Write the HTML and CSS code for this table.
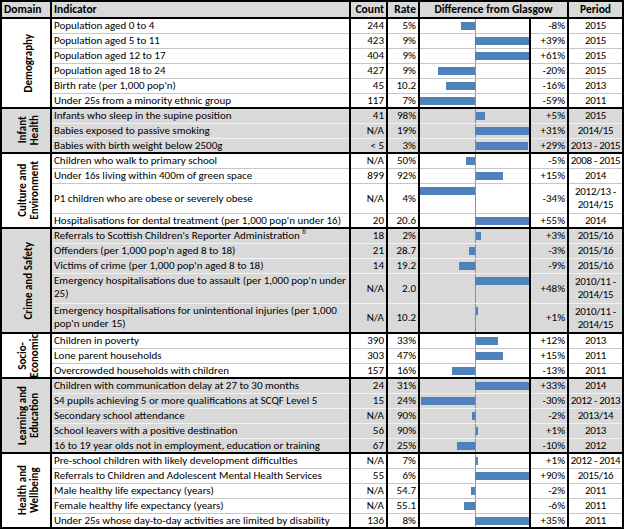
FILE: index.html
```html
<!DOCTYPE html>
<html>
<head>
<meta charset="utf-8">
<link rel="stylesheet" href="styles.css">
</head>
<body>
<table class="tbl">
  <colgroup>
    <col class="c-dom"><col class="c-ind"><col class="c-cnt"><col class="c-rate"><col class="c-bar"><col class="c-pct"><col class="c-per">
  </colgroup>
  <thead>
    <tr class="hdr">
      <th class="left">Domain</th>
      <th class="left">Indicator</th>
      <th class="num">Count</th>
      <th class="num">Rate</th>
      <th colspan="2" class="ctr">Difference from Glasgow</th>
      <th class="ctr">Period</th>
    </tr>
  </thead>

  <tbody class="grp white">
    <tr><td class="dom" rowspan="6"><div class="dom-box"><span class="vt">Demography</span></div></td>
      <td class="ind">Population aged 0 to 4</td><td class="num">244</td><td class="num">5%</td>
      <td class="bar"><div class="track"><div class="neg"><i style="width:14px"></i></div><div class="pos"></div></div></td><td class="num">-8%</td><td class="per">2015</td></tr>
    <tr><td class="ind">Population aged 5 to 11</td><td class="num">423</td><td class="num">9%</td>
      <td class="bar"><div class="track"><div class="neg"></div><div class="pos"><i style="width:54px"></i></div></div></td><td class="num">+39%</td><td class="per">2015</td></tr>
    <tr><td class="ind">Population aged 12 to 17</td><td class="num">404</td><td class="num">9%</td>
      <td class="bar"><div class="track"><div class="neg"></div><div class="pos"><i style="width:54px"></i></div></div></td><td class="num">+61%</td><td class="per">2015</td></tr>
    <tr><td class="ind">Population aged 18 to 24</td><td class="num">427</td><td class="num">9%</td>
      <td class="bar"><div class="track"><div class="neg"><i style="width:37px"></i></div><div class="pos"></div></div></td><td class="num">-20%</td><td class="per">2015</td></tr>
    <tr><td class="ind">Birth rate (per 1,000 pop'n)</td><td class="num">45</td><td class="num">10.2</td>
      <td class="bar"><div class="track"><div class="neg"><i style="width:29px"></i></div><div class="pos"></div></div></td><td class="num">-16%</td><td class="per">2013</td></tr>
    <tr><td class="ind">Under 25s from a minority ethnic group</td><td class="num">117</td><td class="num">7%</td>
      <td class="bar"><div class="track"><div class="neg"><i style="width:55px"></i></div><div class="pos"></div></div></td><td class="num">-59%</td><td class="per">2011</td></tr>
  </tbody>

  <tbody class="grp gray">
    <tr><td class="dom" rowspan="3"><div class="dom-box"><span class="vt">Infant<br>Health</span></div></td>
      <td class="ind">Infants who sleep in the supine position</td><td class="num">41</td><td class="num">98%</td>
      <td class="bar"><div class="track"><div class="neg"></div><div class="pos"><i style="width:9px"></i></div></div></td><td class="num">+5%</td><td class="per">2015</td></tr>
    <tr><td class="ind">Babies exposed to passive smoking</td><td class="num">N/A</td><td class="num">19%</td>
      <td class="bar"><div class="track"><div class="neg"></div><div class="pos"><i style="width:54px"></i></div></div></td><td class="num">+31%</td><td class="per">2014/15</td></tr>
    <tr><td class="ind">Babies with birth weight below 2500g</td><td class="num">&lt; 5</td><td class="num">3%</td>
      <td class="bar"><div class="track"><div class="neg"></div><div class="pos"><i style="width:52px"></i></div></div></td><td class="num">+29%</td><td class="per">2013 - 2015</td></tr>
  </tbody>

  <tbody class="grp white">
    <tr><td class="dom" rowspan="4"><div class="dom-box"><span class="vt">Culture and<br>Environment</span></div></td>
      <td class="ind">Children who walk to primary school</td><td class="num">N/A</td><td class="num">50%</td>
      <td class="bar"><div class="track"><div class="neg"><i style="width:9px"></i></div><div class="pos"></div></div></td><td class="num">-5%</td><td class="per">2008 - 2015</td></tr>
    <tr><td class="ind">Under 16s living within 400m of green space</td><td class="num">899</td><td class="num">92%</td>
      <td class="bar"><div class="track"><div class="neg"></div><div class="pos"><i style="width:27px"></i></div></div></td><td class="num">+15%</td><td class="per">2014</td></tr>
    <tr class="dbl"><td class="ind">P1 children who are obese or severely obese</td><td class="num">N/A</td><td class="num">4%</td>
      <td class="bar"><div class="track"><div class="neg"><i style="width:55px"></i></div><div class="pos"></div></div></td><td class="num">-34%</td><td class="per">2012/13 -<br>2014/15</td></tr>
    <tr><td class="ind">Hospitalisations for dental treatment (per 1,000 pop'n under 16)</td><td class="num">20</td><td class="num">20.6</td>
      <td class="bar"><div class="track"><div class="neg"></div><div class="pos"><i style="width:54px"></i></div></div></td><td class="num">+55%</td><td class="per">2014</td></tr>
  </tbody>

  <tbody class="grp gray">
    <tr><td class="dom" rowspan="5"><div class="dom-box"><span class="vt">Crime and Safety</span></div></td>
      <td class="ind">Referrals to Scottish Children's Reporter Administration <sup>6</sup></td><td class="num">18</td><td class="num">2%</td>
      <td class="bar"><div class="track"><div class="neg"></div><div class="pos"><i style="width:5px"></i></div></div></td><td class="num">+3%</td><td class="per">2015/16</td></tr>
    <tr><td class="ind">Offenders (per 1,000 pop'n aged 8 to 18)</td><td class="num">21</td><td class="num">28.7</td>
      <td class="bar"><div class="track"><div class="neg"><i style="width:6px"></i></div><div class="pos"></div></div></td><td class="num">-3%</td><td class="per">2015/16</td></tr>
    <tr><td class="ind">Victims of crime (per 1,000 pop'n aged 8 to 18)</td><td class="num">14</td><td class="num">19.2</td>
      <td class="bar"><div class="track"><div class="neg"><i style="width:16px"></i></div><div class="pos"></div></div></td><td class="num">-9%</td><td class="per">2015/16</td></tr>
    <tr class="dbl"><td class="ind top">Emergency hospitalisations due to assault (per 1,000 pop'n under<br>25)</td><td class="num">N/A</td><td class="num">2.0</td>
      <td class="bar"><div class="track"><div class="neg"></div><div class="pos"><i style="width:54px"></i></div></div></td><td class="num">+48%</td><td class="per">2010/11 -<br>2014/15</td></tr>
    <tr class="dbl"><td class="ind top">Emergency hospitalisations for unintentional injuries (per 1,000<br>pop'n under 15)</td><td class="num">N/A</td><td class="num">10.2</td>
      <td class="bar"><div class="track"><div class="neg"></div><div class="pos"><i style="width:2px"></i></div></div></td><td class="num">+1%</td><td class="per">2010/11 -<br>2014/15</td></tr>
  </tbody>

  <tbody class="grp white">
    <tr><td class="dom" rowspan="3"><div class="dom-box"><span class="vt">Socio-<br>Economic</span></div></td>
      <td class="ind">Children in poverty</td><td class="num">390</td><td class="num">33%</td>
      <td class="bar"><div class="track"><div class="neg"></div><div class="pos"><i style="width:22px"></i></div></div></td><td class="num">+12%</td><td class="per">2013</td></tr>
    <tr><td class="ind">Lone parent households</td><td class="num">303</td><td class="num">47%</td>
      <td class="bar"><div class="track"><div class="neg"></div><div class="pos"><i style="width:27px"></i></div></div></td><td class="num">+15%</td><td class="per">2011</td></tr>
    <tr><td class="ind">Overcrowded households with children</td><td class="num">157</td><td class="num">16%</td>
      <td class="bar"><div class="track"><div class="neg"><i style="width:23px"></i></div><div class="pos"></div></div></td><td class="num">-13%</td><td class="per">2011</td></tr>
  </tbody>

  <tbody class="grp gray">
    <tr><td class="dom" rowspan="5"><div class="dom-box"><span class="vt">Learning and<br>Education</span></div></td>
      <td class="ind">Children with communication delay at 27 to 30 months</td><td class="num">24</td><td class="num">31%</td>
      <td class="bar"><div class="track"><div class="neg"></div><div class="pos"><i style="width:54px"></i></div></div></td><td class="num">+33%</td><td class="per">2014</td></tr>
    <tr><td class="ind">S4 pupils achieving 5 or more qualifications at SCQF Level 5</td><td class="num">15</td><td class="num">24%</td>
      <td class="bar"><div class="track"><div class="neg"><i style="width:54px"></i></div><div class="pos"></div></div></td><td class="num">-30%</td><td class="per">2012 - 2013</td></tr>
    <tr><td class="ind">Secondary school attendance</td><td class="num">N/A</td><td class="num">90%</td>
      <td class="bar"><div class="track"><div class="neg"><i style="width:3px"></i></div><div class="pos"></div></div></td><td class="num">-2%</td><td class="per">2013/14</td></tr>
    <tr><td class="ind">School leavers with a positive destination</td><td class="num">56</td><td class="num">90%</td>
      <td class="bar"><div class="track"><div class="neg"></div><div class="pos"><i style="width:2px"></i></div></div></td><td class="num">+1%</td><td class="per">2013</td></tr>
    <tr><td class="ind">16 to 19 year olds not in employment, education or training</td><td class="num">67</td><td class="num">25%</td>
      <td class="bar"><div class="track"><div class="neg"><i style="width:18px"></i></div><div class="pos"></div></div></td><td class="num">-10%</td><td class="per">2012</td></tr>
  </tbody>

  <tbody class="grp white">
    <tr><td class="dom" rowspan="5"><div class="dom-box"><span class="vt">Health and<br>Wellbeing</span></div></td>
      <td class="ind">Pre-school children with likely development difficulties</td><td class="num">N/A</td><td class="num">7%</td>
      <td class="bar"><div class="track"><div class="neg"></div><div class="pos"><i style="width:2px"></i></div></div></td><td class="num">+1%</td><td class="per">2012 - 2014</td></tr>
    <tr><td class="ind">Referrals to Children and Adolescent Mental Health Services</td><td class="num">55</td><td class="num">6%</td>
      <td class="bar"><div class="track"><div class="neg"></div><div class="pos"><i style="width:54px"></i></div></div></td><td class="num">+90%</td><td class="per">2015/16</td></tr>
    <tr><td class="ind">Male healthy life expectancy (years)</td><td class="num">N/A</td><td class="num">54.7</td>
      <td class="bar"><div class="track"><div class="neg"><i style="width:4px"></i></div><div class="pos"></div></div></td><td class="num">-2%</td><td class="per">2011</td></tr>
    <tr><td class="ind">Female healthy life expectancy (years)</td><td class="num">N/A</td><td class="num">55.1</td>
      <td class="bar"><div class="track"><div class="neg"><i style="width:11px"></i></div><div class="pos"></div></div></td><td class="num">-6%</td><td class="per">2011</td></tr>
    <tr><td class="ind">Under 25s whose day-to-day activities are limited by disability</td><td class="num">136</td><td class="num">8%</td>
      <td class="bar"><div class="track"><div class="neg"></div><div class="pos"><i style="width:54px"></i></div></div></td><td class="num">+35%</td><td class="per">2011</td></tr>
  </tbody>
</table>
</body>
</html>
```

FILE: styles.css
```css
html, body {
  margin: 0;
  padding: 0;
  background: #ffffff;
}

.tbl {
  border-collapse: collapse;
  table-layout: fixed;
  width: 622px;
  font-family: Carlito, Lato, "Liberation Sans", sans-serif;
  font-size: 11px;
  line-height: 13px;
  color: #000;
  border: 2px solid #000;
}

.c-dom { width: 50px; }
.c-ind { width: 299px; }
.c-cnt { width: 37px; }
.c-rate { width: 32px; }
.c-bar { width: 111px; }
.c-pct { width: 38px; }
.c-per { width: 55px; }

th, td {
  padding: 0 2px;
  border-left: 2px solid #000;
  border-right: 2px solid #000;
  white-space: nowrap;
  overflow: hidden;
  vertical-align: middle;
}

.hdr th {
  height: 15px;
  background: #d9d9d9;
  font-weight: bold;
  border-bottom: 2px solid #000;
  font-size: 11.5px;
}

th.left { text-align: left; }
.num { text-align: right; }
.ctr { text-align: center; }

.per {
  text-align: center;
  padding: 0;
  letter-spacing: -0.3px;
}

.grp tr { height: 15px; }
.grp tr.dbl { height: 30px; }

.grp tr:first-child td { border-top: 2px solid #000; }

.white td { background-color: #ffffff; border-bottom: 1px solid #c6c6c6; }
.gray td { background-color: #d9d9d9; border-bottom: 1px solid #f2f2f2; }

.grp tr:last-child td { border-bottom: 2px solid #000; }
.grp td.dom { border-bottom: 2px solid #000; }

.ind.top { vertical-align: top; }

sup {
  font-size: 7px;
  line-height: 0;
  vertical-align: 5px;
}

td.dom {
  text-align: center;
  font-weight: bold;
  padding: 0 0 0 5px;
  overflow: visible;
}

.dom-box {
  height: 30px;
  display: flex;
  align-items: center;
  justify-content: center;
}

.vt {
  flex: none;
  display: block;
  writing-mode: vertical-rl;
  transform: rotate(180deg);
  line-height: 12px;
  text-align: center;
  white-space: nowrap;
}

td.bar {
  padding: 3px 0 0 0;
  vertical-align: top;
  background-image: linear-gradient(#d6679f, #d6679f);
  background-size: 1px 100%;
  background-position: 55px 0;
  background-repeat: no-repeat;
}

.track {
  display: flex;
  height: 8px;
}

.neg {
  width: 55px;
  display: flex;
  justify-content: flex-end;
}

.pos {
  margin-left: 1px;
  display: flex;
  justify-content: flex-start;
}

.track i {
  display: block;
  height: 8px;
  background: #4f81bd;
}
```
